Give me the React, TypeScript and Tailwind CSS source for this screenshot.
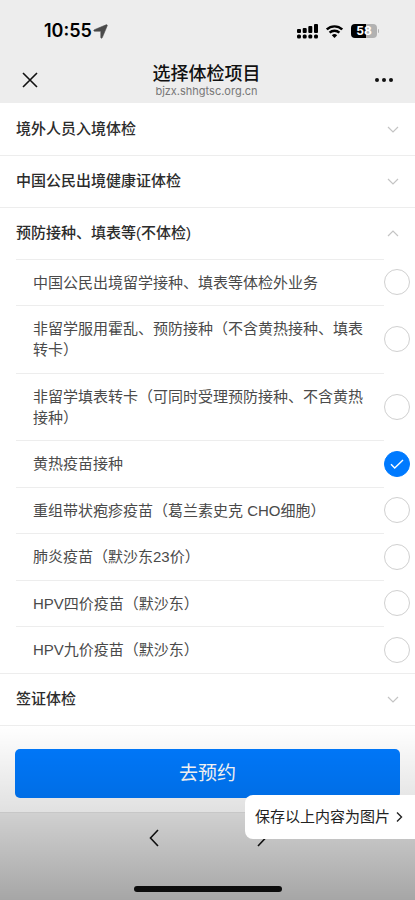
import { ReactNode, useState } from "react"

const projects = [
    "中国公民出境留学接种、填表等体检外业务",
    "非留学服用霍乱、预防接种（不含黄热接种、填表转卡）",
    "非留学填表转卡（可同时受理预防接种、不含黄热接种）",
    "黄热疫苗接种",
    "重组带状疱疹疫苗（葛兰素史克 CHO细胞）",
    "肺炎疫苗（默沙东23价）",
    "HPV四价疫苗（默沙东）",
    "HPV九价疫苗（默沙东）",
]

export default function App() {
    const [selected, setSelected] = useState(3)

    return (
        <div className="relative min-h-screen flex flex-col bg-white font-['Liberation_Sans','Noto_Sans_CJK_SC',sans-serif] text-[#333]">
            <header className="bg-[#ededed]">
                <StatusBar />
                <NavBar />
            </header>

            <main className="flex-1 pt-px">
                <SectionTitle label="境外人员入境体检" />
                <SectionTitle label="中国公民出境健康证体检" />
                <SectionTitle label="预防接种、填表等(不体检)" open>
                    <ul>
                        {projects.map((name, i) => (
                            <ProjectRow key={name} name={name} checked={selected === i} onSelect={() => setSelected(i)} />
                        ))}
                    </ul>
                </SectionTitle>
                <SectionTitle label="签证体检" />

                <div className="px-[15px] pt-[23px] pb-[14px]">
                    <button className="w-full h-[49px] pt-[2px] rounded-[5px] bg-[#007aff] text-white text-[19px]">去预约</button>
                </div>
            </main>

            <BottomBar />

            {/* shade over the lower part of the page */}
            <div className="absolute inset-x-0 bottom-0 h-[175px] bg-linear-to-b from-black/0 via-black/12 to-black/30 pointer-events-none"></div>

            <button className="absolute right-0 bottom-[61px] h-11 pl-[10px] pr-3 flex items-center gap-[6px] rounded-l-lg bg-white text-[15px] text-[#222]">
                保存以上内容为图片
                <svg className="w-[7px] h-3" viewBox="0 0 7 12" fill="none" stroke="currentColor" strokeWidth="1.4">
                    <path d="M1 1.5 5.5 6 1 10.5" />
                </svg>
            </button>
        </div>
    )
}

function StatusBar() {
    return (
        <div className="h-14 pt-[6px] pl-11 pr-9 flex items-center justify-between text-black">
            <div className="flex items-center gap-[1px]">
                <span className="font-['Inter',sans-serif] font-semibold text-[18px] leading-6">10:55</span>
                <svg className="w-[15px] h-[15px]" viewBox="0 0 15 15" fill="#4a4a4a" stroke="#4a4a4a" strokeWidth=".6">
                    <path d="M13.2.8c.7-.3 1.3.3 1 1L9.3 13.6c-.4.9-1.5.8-1.5-.2V7.6c0-.3-.1-.4-.4-.4H1.6c-1 0-1.1-1.1-.2-1.5z" />
                </svg>
            </div>
            <div className="flex items-center gap-2">
                <svg className="w-[21px] h-[15px]" viewBox="0 0 21 15" fill="currentColor">
                    <rect x="0" y="5" width="4" height="4" rx="1" />
                    <rect x="5.7" y="4" width="4" height="5" rx="1" />
                    <rect x="11.3" y="2" width="4" height="7" rx="1" />
                    <rect x="17" y="0" width="4" height="9" rx="1" />
                    <rect x="0" y="10.6" width="4" height="4" rx="1.5" />
                    <rect x="5.700" y="10.6" width="4" height="4" rx="1.5" />
                    <rect x="11.3" y="10.6" width="4" height="4" rx="1.5" />
                    <rect x="17" y="10.6" width="4" height="4" rx="1.5" />
                </svg>
                <svg className="w-[17px] h-[13px]" viewBox="0 0 17 13" fill="none" stroke="currentColor" strokeWidth="2.4">
                    <path d="M.8 4.5a11 11 0 0 1 15.4 0" />
                    <path d="M3.6 7.7a7 7 0 0 1 9.8 0" />
                    <path d="M8.5 13 5.8 10.3a3.9 3.9 0 0 1 5.4 0z" fill="currentColor" stroke="none" />
                </svg>
                <div className="flex items-center gap-[1px]">
                    <div className="w-[26px] h-[14px] rounded-[4px] bg-linear-to-r from-black from-58% to-[#b2b2b2] to-58% text-white text-center font-['Inter',sans-serif] font-bold text-[12px] leading-[14px]">58</div>
                    <div className="w-[1px] h-1 rounded-r bg-[#b2b2b2]"></div>
                </div>
            </div>
        </div>
    )
}

function NavBar() {
    return (
        <div className="h-[47px] px-[21px] flex items-center justify-between text-[#111]">
            <button aria-label="关闭" className="w-[18px] h-[18px]">
                <svg viewBox="0 0 18 18" fill="none" stroke="currentColor" strokeWidth="1.6">
                    <path d="M2 2l14 14M16 2 2 16" />
                </svg>
            </button>
            <div className="flex flex-col items-center">
                <h1 className="text-[18px] leading-[22px] font-medium">选择体检项目</h1>
                <span className="font-['Inter',sans-serif] text-[11px] leading-3 text-[#777]">bjzx.shhgtsc.org.cn</span>
            </div>
            <button aria-label="更多" className="w-5 h-5">
                <svg viewBox="0 0 20 20" fill="currentColor">
                    <circle cx="3" cy="10" r="2" />
                    <circle cx="10" cy="10" r="2" />
                    <circle cx="17" cy="10" r="2" />
                </svg>
            </button>
        </div>
    )
}

function SectionTitle({label, open = false, children}: {label: string, open?: boolean, children?: ReactNode}) {
    return (
        <section className="border-b border-[#ededed]">
            <button aria-expanded={open} className="w-full h-[51px] px-4 flex items-center justify-between text-[15px] font-medium text-[#2c2c2c]">
                {label}
                <svg className="w-3 h-[7px]" viewBox="0 0 12 7" fill="none" stroke="#c4c4c4" strokeWidth="1.2">
                    <path d={open ? "M1 6 6 1l5 5" : "M1 1l5 5 5-5"} />
                </svg>
            </button>
            {children}
        </section>
    )
}

function ProjectRow({name, checked, onSelect}: {name: string, checked: boolean, onSelect: () => void}) {
    return (
        <li className="group">
            <label className="pl-4 pr-[5px] flex items-stretch">
                <span className="flex-1 pl-[17px] pr-4 pt-3 pb-3 group-even:pb-[13px] border-t border-[#ededed] text-[15px] leading-[21px] text-[#4a4a4a]">{name}</span>
                <span className="grid place-items-center">
                    <input
                        type="radio"
                        name="project"
                        checked={checked}
                        onChange={onSelect}
                        className="[grid-area:1/1] appearance-none w-[26px] h-[26px] rounded-full border border-[#d0d0d0] bg-white checked:border-[#007aff] checked:bg-[#007aff]"
                    />
                    {checked && (
                        <svg className="[grid-area:1/1] w-[14px] h-[10px] pointer-events-none" viewBox="0 0 14 10" fill="none" stroke="white" strokeWidth="1.4">
                            <path d="M1 5.2 4.700 9 13 1" />
                        </svg>
                    )}
                </span>
            </label>
        </li>
    )
}

function BottomBar() {
    return (
        <footer className="h-[88px] pt-4 pb-2 flex flex-col items-center justify-between border-t border-[#e2e2e2] bg-[#ededed] text-[#111]">
            <div className="flex gap-[98px]">
                <button aria-label="后退">
                    <svg className="w-[10px] h-[18px]" viewBox="0 0 10 18" fill="none" stroke="currentColor" strokeWidth="1.6">
                        <path d="M9 1 1.5 9 9 17" />
                    </svg>
                </button>
                <button aria-label="前进">
                    <svg className="w-[10px] h-[18px]" viewBox="0 0 10 18" fill="none" stroke="currentColor" strokeWidth="1.6">
                        <path d="M1 1l7.5 8L1 17" />
                    </svg>
                </button>
            </div>
            <div className="w-[148px] h-[6px] rounded-full bg-[#111]"></div>
        </footer>
    )
}
